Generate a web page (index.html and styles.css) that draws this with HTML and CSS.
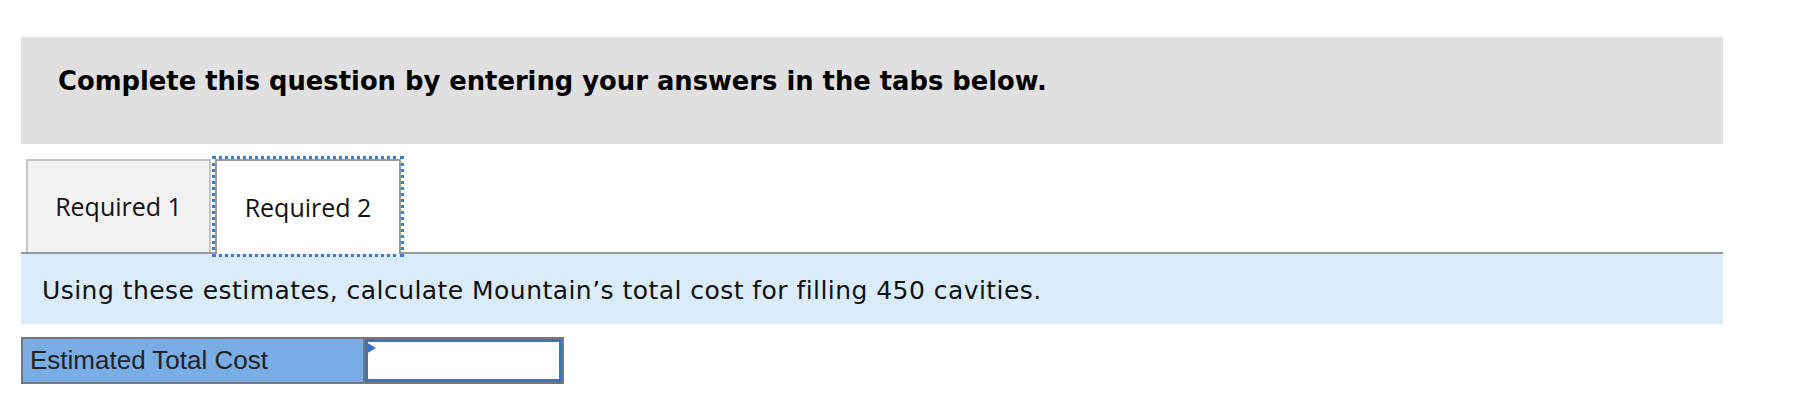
FILE: index.html
```html
<!DOCTYPE html>
<html lang="en">
<head>
    <meta charset="UTF-8">
    <title>Required 2</title>
    <link rel="stylesheet" href="styles.css">
</head>
<body>
    <div class="question">
        <div class="question-header">Complete this question by entering your answers in the tabs below.</div>

        <div class="tab-strip">
            <button class="tab">Required 1</button>
            <button class="tab active">Required 2</button>
        </div>

        <div class="instructions">Using these estimates, calculate Mountain&rsquo;s total cost for filling 450 cavities.</div>

        <table class="answer-table">
            <tr>
                <td class="answer-label">Estimated Total Cost</td>
                <td class="answer-cell"><span class="cell-marker"></span><input type="text" class="answer-input"></td>
            </tr>
        </table>
    </div>
</body>
</html>
```

FILE: styles.css
```css
body {
    margin: 0;
    padding: 37px 0 0 21px;
    background: #fff;
}
.question {
    width: 1702px;
}
.question-header {
    background-color: #e0e0e0;
    height: 107px;
    box-sizing: border-box;
    padding: 29px 0 0 37px;
    font-family: "DejaVu Sans", Verdana, sans-serif;
    font-weight: bold;
    font-size: 25.8px;
    line-height: 30px;
    color: #000;
}
.tab-strip {
    display: flex;
    align-items: flex-start;
    padding: 15px 0 0 5px;
    border-bottom: 2px solid #999;
    height: 93px;
}
.tab {
    font-family: "Open Sans", "Segoe UI", sans-serif;
    font-size: 25px;
    color: #111;
    background-color: #f2f2f2;
    border: 2px solid #c4c4c4;
    border-bottom: none;
    height: 93px;
    width: 185px;
    padding: 0 0 2px 0;
    margin: 0;
    cursor: pointer;
}
.tab.active {
    background-color: #fff;
    border-color: #999;
    height: 95px;
    width: 186px;
    margin-left: 4px;
    outline: 3px dotted #3d7ccb;
    outline-offset: 0;
}
.instructions {
    background-color: #daecfa;
    height: 70px;
    box-sizing: border-box;
    padding: 19px 0 0 21px;
    font-family: "DejaVu Sans", Verdana, sans-serif;
    font-size: 25px;
    letter-spacing: 0.45px;
    line-height: 36px;
    color: #111;
}
.answer-table {
    margin-top: 13px;
    border-collapse: collapse;
    border: 2px solid #777;
}
.answer-table td {
    padding: 0;
    height: 43px;
    vertical-align: middle;
}
.answer-label {
    background-color: #7aade5;
    width: 333px;
    padding-left: 7px !important;
    font-family: "Liberation Sans", Arial, sans-serif;
    font-size: 26px;
    color: #222;
    border-right: 2px solid #777;
}
.answer-cell {
    position: relative;
    width: 197px;
}
.answer-input {
    display: block;
    box-sizing: border-box;
    width: 197px;
    height: 43px;
    margin: 0;
    border: 3px solid #3a74bc;
    background: #fff;
}
.cell-marker {
    position: absolute;
    left: 1px;
    top: 3px;
    width: 0;
    height: 0;
    border-top: 6px solid transparent;
    border-bottom: 6px solid transparent;
    border-left: 10px solid #3a74bc;
}
```
